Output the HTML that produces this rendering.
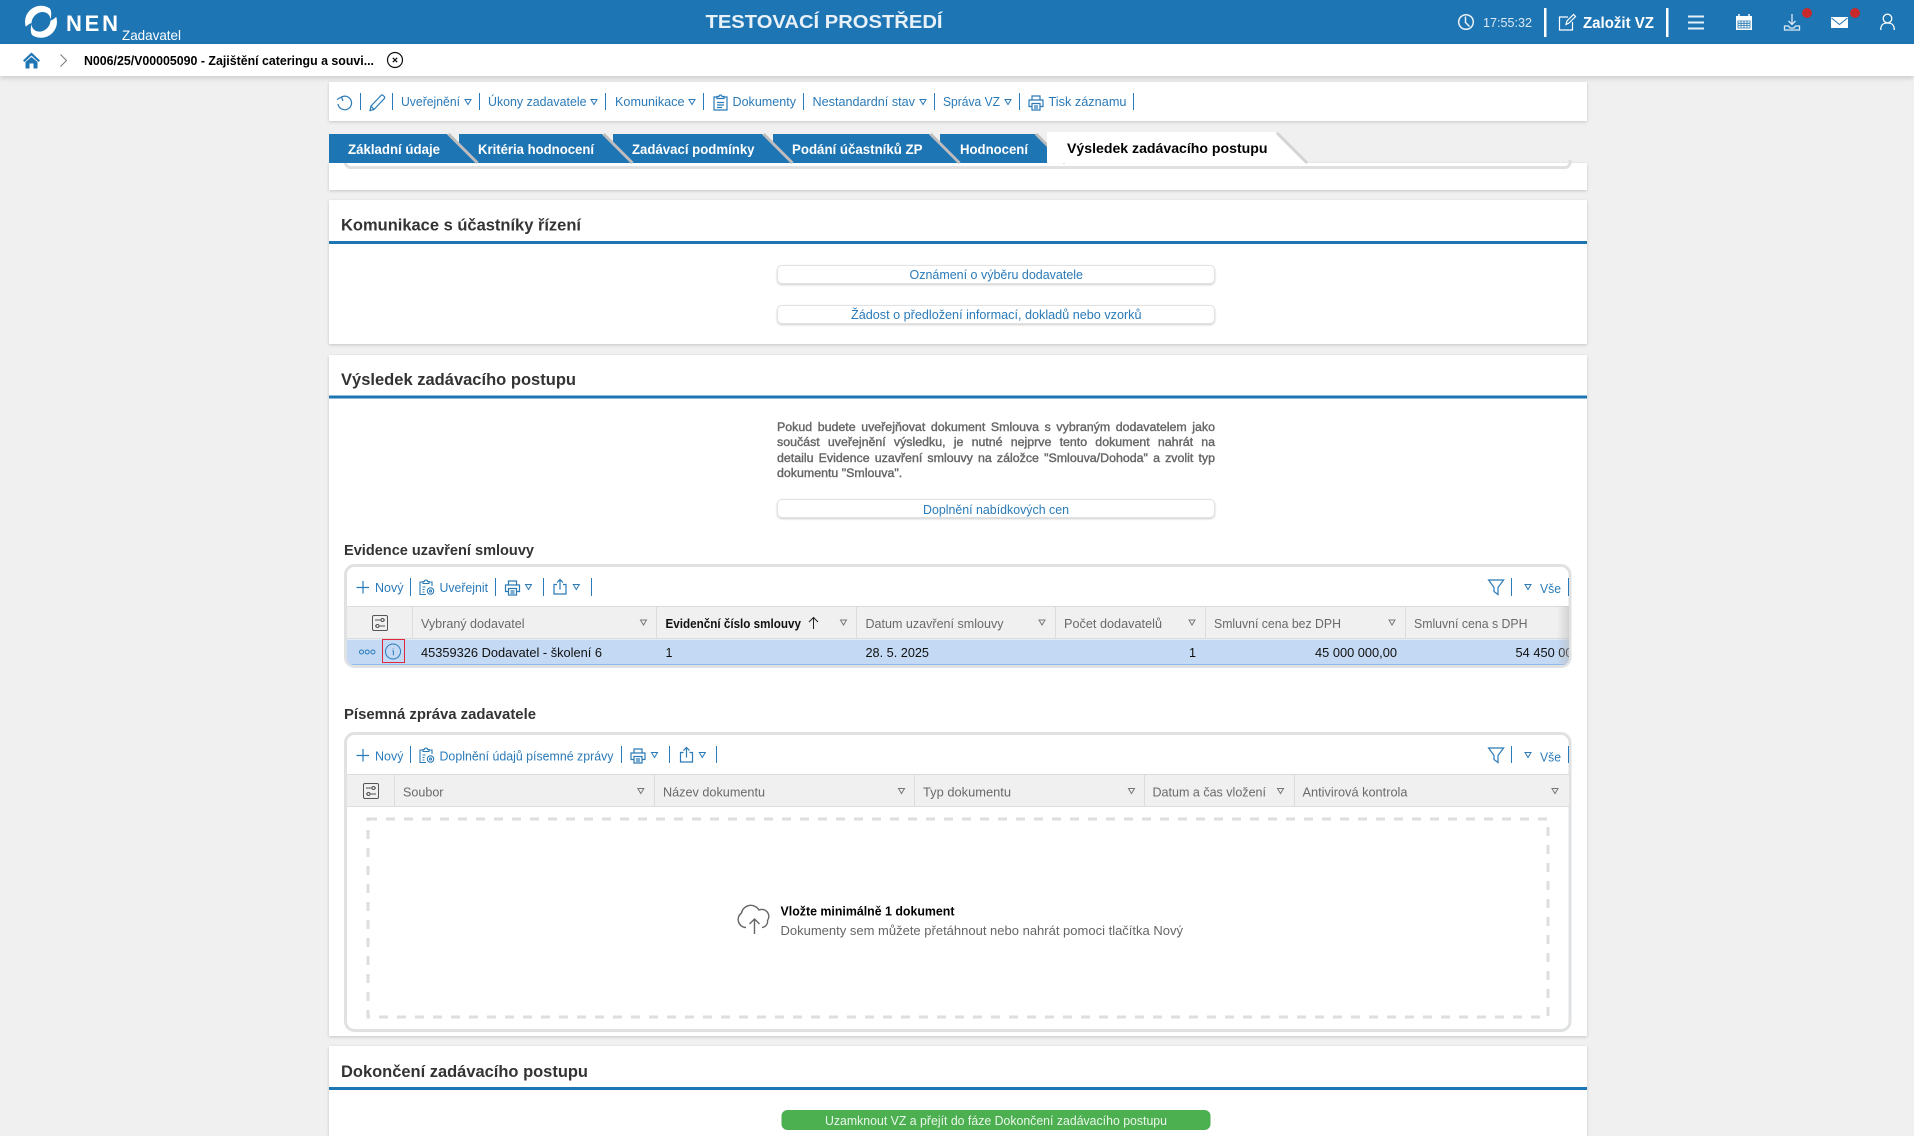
<!DOCTYPE html>
<html lang="cs"><head><meta charset="utf-8"><title>NEN</title>
<style>
html,body{margin:0;padding:0;width:1914px;height:1136px;overflow:hidden;background:#f0f0f0;font-family:"Liberation Sans",sans-serif}
.a{position:absolute}
.card{position:absolute;left:329px;width:1258px;background:#fff;box-shadow:0 1px 3px rgba(0,0,0,.18)}
.btn{position:absolute;left:777px;width:438px;height:19px;box-sizing:border-box;border:1px solid #e2e2e2;border-radius:5px;background:#fff;box-shadow:0 1px 2px rgba(0,0,0,.2)}
.j{position:absolute;left:777px;width:438px;font-size:12.4px;line-height:15px;color:#666;-webkit-text-stroke:.4px #666;white-space:nowrap;text-align:justify;text-align-last:justify}
svg{position:absolute;left:0;top:0}
text{font-family:"Liberation Sans",sans-serif;font-size:13px}
.l{fill:#2a7ab8}
.h{fill:#6a6a6a;font-size:12.6px}
.t{font-weight:bold;fill:#fff;font-size:13.5px}
.s{font-weight:bold;fill:#333;font-size:17px}
.u{font-weight:bold;fill:#333;font-size:14.5px}
.b{fill:#111;font-size:12.6px}
.ic{fill:none;stroke:#2a7ab8;stroke-width:1.2}
.wi{fill:none;stroke:#fff;stroke-width:1.5}
</style></head><body>
<div class="a" style="left:0;top:0;width:1914px;height:44px;background:#1e75b4"></div>
<div class="a" style="left:0;top:44px;width:1914px;height:32px;background:#fff;box-shadow:0 2px 5px rgba(0,0,0,.16)"></div>
<div class="card" style="top:82px;height:39px"></div>
<div class="card" style="top:163px;height:27px"></div>
<div class="card" style="top:200px;height:144px"></div>
<div class="card" style="top:355px;height:681px"></div>
<div class="card" style="top:1046px;height:90px"></div>
<div class="btn" style="top:264.5px"></div>
<div class="btn" style="top:304.5px"></div>
<div class="btn" style="top:499px"></div>
<div class="j" style="top:420px">Pokud budete uveřejňovat dokument Smlouva s vybraným dodavatelem jako</div>
<div class="j" style="top:435px">součást uveřejnění výsledku, je nutné nejprve tento dokument nahrát na</div>
<div class="j" style="top:451px">detailu Evidence uzavření smlouvy na záložce "Smlouva/Dohoda" a zvolit typ</div>
<div class="j" style="top:466px;text-align-last:left;width:auto">dokumentu "Smlouva".</div>

<svg width="1914" height="1136" viewBox="0 0 1914 1136" xmlns="http://www.w3.org/2000/svg">
<defs>
<path id="tri" d="M.5.5h6L3.5 5.5z" fill="none" stroke-width="1"/>
<g id="print" fill="none" stroke-width="1.2"><path d="M4 5V1h8v4M4 11.500H1V5h14v6.500h-3M4 8.500h8V15H4zM6 11h4M6 13h4"/></g>
<g id="share" fill="none" stroke-width="1.2"><path d="M4 6H1v9.500h12V6h-3M7 11V1M4 4l3-3 3 3"/></g>
<g id="clip" fill="none" stroke-width="1.1"><path d="M4 3H1v12.500h6M10 3h3v4M4 4.500V2.500h1.500a1.500 1.500 0 0 1 3 0H10v2zM3.500 8h3M3.500 10.500h2M3.500 13h2"/><circle cx="11.500" cy="12" r="3.200"/><circle cx="11.500" cy="12" r="1"/></g>
<g id="funnel" fill="none" stroke-width="1.200"><path d="M.6 1h15L10 8.500V15.500L6 12.500V8.500z"/></g>
<g id="set" fill="none" stroke="#555" stroke-width="1"><rect x=".5" y=".5" width="15" height="15" rx="1.500"/><path d="M3 5h6M12 5h1M3 11h1M7 11h6"/><circle cx="10.500" cy="5" r="1.500"/><circle cx="5.500" cy="11" r="1.500"/></g>
<linearGradient id="fade" x1="0" x2="1" y1="0" y2="0"><stop offset="0" stop-color="#bbb" stop-opacity="0"/><stop offset="1" stop-color="#bbb" stop-opacity=".55"/></linearGradient>
<clipPath id="box1"><rect x="347" y="567" width="1222" height="98" rx="7"/></clipPath>
</defs>

<!-- logo -->
<circle cx="41" cy="21.800" r="16" fill="#fff"/>
<ellipse cx="41" cy="21.800" rx="10.500" ry="8.800" transform="rotate(-50 41 21.800)" fill="#1e75b4"/>
<path d="M50 5.300L56 13.800Q53 18.300 50 19.300Q51 11.300 48 7.300zM32 38.300L26 29.800Q29 25.300 32 24.300Q31 32.300 34 36.300z" fill="#1e75b4" transform="rotate(8 41 21.800)"/>
<text x="66" y="31" textLength="52" lengthAdjust="spacing" style="font-size:22px;font-weight:bold;fill:#fff">NEN</text>
<text x="122" y="40" textLength="59" lengthAdjust="spacingAndGlyphs" style="font-size:14px;fill:#fff">Zadavatel</text>
<text x="705.500" y="28" textLength="237" lengthAdjust="spacingAndGlyphs" style="font-size:18px;font-weight:bold;fill:#e8f1f8">TESTOVACÍ PROSTŘEDÍ</text>

<!-- header right -->
<circle cx="1466" cy="22" r="7.300" class="wi" stroke-opacity=".9"/><path d="M1465.500 16.500V22.500L1469.500 26.500" class="wi" stroke-opacity=".9"/>
<text x="1483" y="27" textLength="49" lengthAdjust="spacingAndGlyphs" style="font-size:13px;fill:#dbe9f4">17:55:32</text>
<rect x="1544" y="8" width="2.500" height="29" fill="#fff"/>
<path d="M1568 17H1559.500V30H1572.500V22M1566 24.500L1567 21L1573.500 14.500L1575.500 16.500L1569 23z" class="wi" style="stroke-width:1.200"/>
<text x="1583" y="28" textLength="71" lengthAdjust="spacingAndGlyphs" style="font-size:15.500px;font-weight:bold;fill:#fff">Založit VZ</text>
<rect x="1666" y="8" width="2.500" height="29" fill="#fff"/>
<path d="M1688 16.500h16M1688 22.500h16M1688 28.500h16" stroke="#e6f0f7" stroke-width="2" fill="none"/>
<path d="M1736 16h16v14h-16z" fill="#fff"/><path d="M1739 14v3.500M1749 14v3.500" stroke="#fff" stroke-width="1.500"/>
<path d="M1738 21h12v7h-12zM1738 23.300h12M1738 25.600h12M1741 21v7M1744 21v7M1747 21v7" fill="none" stroke="#1e75b4" stroke-width=".8"/>
<path d="M1792 14v10M1788.500 21l3.500 3.500 3.500-3.500M1784.500 26h4l1.500 2h4l1.500-2h4v4h-15z" fill="none" stroke="#dbe9f4" stroke-width="1.300"/>
<circle cx="1807" cy="13" r="5" fill="#c62a2a"/>
<path d="M1831 17h17v11h-17z" fill="#fff"/><path d="M1831.500 18l8 6.500 8-6.500" fill="none" stroke="#1e75b4" stroke-width="1"/>
<circle cx="1855" cy="13" r="5" fill="#c62a2a"/>
<circle cx="1887.500" cy="18.500" r="4.300" class="wi" style="stroke-width:1.300"/><path d="M1880.700 30c0-5 2-7 6.800-7s6.800 2 6.800 7" class="wi" style="stroke-width:1.300"/>

<!-- breadcrumb -->
<path d="M23 60.500L31.500 52.500 40 60.500 38.500 62 31.500 55.500 24.500 62z" fill="#1e75b4"/>
<path d="M25.500 62L31.500 57 37.500 62V68.500H33.500V63.500H29.500V68.500H25.500z" fill="#1e75b4"/>
<path d="M60.500 54.500L66.500 60.500 60.500 66.500" fill="none" stroke="#777" stroke-width="1"/>
<text x="84" y="65" textLength="290" lengthAdjust="spacingAndGlyphs" style="font-size:12.800px;font-weight:bold;fill:#000">N006/25/V00005090 - Zajištění cateringu a souvi...</text>
<circle cx="395" cy="60" r="7.500" fill="none" stroke="#111" stroke-width="1.200"/><path d="M392.800 57.800l4.400 4.400M397.200 57.800l-4.400 4.400" stroke="#111" stroke-width="1.300"/>

<!-- toolbar -->
<g stroke="#2a7ab8" stroke-width="1" fill="none">
<path d="M360.500 93v17M392.500 93v17M479.500 93v17M605.500 93v17M703.500 93v17M803.500 93v17M934.500 93v17M1019.500 93v17M1133.500 93v17"/>
</g>
<g class="ic">
<path d="M341.500 97A6.800 6.800 0 1 1 338 104"/><path d="M337 99.500L341.500 97 343 101"/>
<path d="M370 110.500l1-4.500L381 95.500a1.500 1.500 0 0 1 2.200 0l1 1a1.500 1.500 0 0 1 0 2.200L374 109.500zM371 106l3 3.500"/>
<path d="M717 97h-3v13h13V97h-3M717 98.500V96.500h2a1.500 1.500 0 0 1 3 0h2v2zM717 102.500h7M717 105h7M717 107.500h5"/>
</g>
<use href="#print" x="1028" y="95" stroke="#2a7ab8"/>
<text class="l" x="401" y="106" textLength="59" lengthAdjust="spacingAndGlyphs">Uveřejnění</text>
<text class="l" x="488" y="106" textLength="98.500" lengthAdjust="spacingAndGlyphs">Úkony zadavatele</text>
<text class="l" x="615" y="106" textLength="69.500" lengthAdjust="spacingAndGlyphs">Komunikace</text>
<text class="l" x="732.500" y="106" textLength="63.500" lengthAdjust="spacingAndGlyphs">Dokumenty</text>
<text class="l" x="812.500" y="106" textLength="102.500" lengthAdjust="spacingAndGlyphs">Nestandardní stav</text>
<text class="l" x="943" y="106" textLength="57" lengthAdjust="spacingAndGlyphs">Správa VZ</text>
<text class="l" x="1048.500" y="106" textLength="78" lengthAdjust="spacingAndGlyphs">Tisk záznamu</text>
<g stroke="#2a7ab8"><use href="#tri" x="464.500" y="99"/><use href="#tri" x="590.500" y="99"/><use href="#tri" x="688.500" y="99"/><use href="#tri" x="919.500" y="99"/><use href="#tri" x="1004.500" y="99"/></g>

<!-- inner box bottom under tabs -->
<path d="M345.500 160V162a5 5 0 0 0 5 5.500H1565a5 5 0 0 0 5-5.500V160" fill="none" stroke="#e0e0e0" stroke-width="3"/>

<!-- tabs -->
<path d="M940 134H1035L1064 163H940z" fill="#1e75b4"/><path d="M1036 134L1065 163" stroke="#bdbdbd" stroke-width="3"/>
<path d="M1047 132H1275L1306 163H1047z" fill="#fff"/><path d="M1277 133L1307 163" stroke="#d4d4d4" stroke-width="3"/>
<path d="M773 134H929L958 163H773z" fill="#1e75b4"/><path d="M930.500 134L959.500 163" stroke="#bdbdbd" stroke-width="3"/>
<path d="M613 134H762L791 163H613z" fill="#1e75b4"/><path d="M763.500 134L792.500 163" stroke="#bdbdbd" stroke-width="3"/>
<path d="M459 134H602L631 163H459z" fill="#1e75b4"/><path d="M603.500 134L632.500 163" stroke="#bdbdbd" stroke-width="3"/>
<path d="M329 134H447L476 163H329z" fill="#1e75b4"/><path d="M448.500 134L477.500 163" stroke="#bdbdbd" stroke-width="3"/>
<text class="t" x="348" y="154" textLength="92" lengthAdjust="spacingAndGlyphs">Základní údaje</text>
<text class="t" x="478" y="154" textLength="116" lengthAdjust="spacingAndGlyphs">Kritéria hodnocení</text>
<text class="t" x="632" y="154" textLength="122.500" lengthAdjust="spacingAndGlyphs">Zadávací podmínky</text>
<text class="t" x="792" y="154" textLength="130.500" lengthAdjust="spacingAndGlyphs">Podání účastníků ZP</text>
<text class="t" x="960" y="154" textLength="68" lengthAdjust="spacingAndGlyphs">Hodnocení</text>
<text class="t" x="1067" y="153" textLength="200.500" lengthAdjust="spacingAndGlyphs" style="fill:#000;font-size:14px">Výsledek zadávacího postupu</text>

<!-- section: komunikace -->
<text class="s" x="341" y="230.500" textLength="240" lengthAdjust="spacingAndGlyphs">Komunikace s účastníky řízení</text>
<rect x="329" y="241" width="1258" height="3" fill="#1e75b4"/>
<text class="l" x="909.500" y="279" textLength="173.500" lengthAdjust="spacingAndGlyphs">Oznámení o výběru dodavatele</text>
<text class="l" x="851" y="319" textLength="290.500" lengthAdjust="spacingAndGlyphs">Žádost o předložení informací, dokladů nebo vzorků</text>

<!-- section: vysledek -->
<text class="s" x="341" y="385" textLength="235" lengthAdjust="spacingAndGlyphs">Výsledek zadávacího postupu</text>
<rect x="329" y="395.500" width="1258" height="3" fill="#1e75b4"/>
<text class="l" x="923" y="514" textLength="146" lengthAdjust="spacingAndGlyphs">Doplnění nabídkových cen</text>

<text class="u" x="344" y="555" textLength="190" lengthAdjust="spacingAndGlyphs">Evidence uzavření smlouvy</text>
<rect x="345.500" y="565.500" width="1224.500" height="101" rx="9" fill="#fff" stroke="#dfe1e3" stroke-width="3"/>
<g clip-path="url(#box1)">
<rect x="347" y="606" width="1222" height="33" fill="#f0f0f0"/>
<path d="M347 606.500H1569M347 638.500H1569" stroke="#dcdcdc" stroke-width="1"/>
<path d="M412.500 606v33M656.500 606v33M856.500 606v33M1055.500 606v33M1205.500 606v33M1405.500 606v33" stroke="#dcdcdc" stroke-width="1"/>
<rect x="347" y="639.500" width="1222" height="25.500" fill="#c3d9f4"/>
<rect x="347" y="664" width="1222" height="1" fill="#8dbbee"/>
<text class="h" x="421" y="628" textLength="103.500" lengthAdjust="spacingAndGlyphs">Vybraný dodavatel</text>
<text x="665.500" y="628" textLength="135.500" lengthAdjust="spacingAndGlyphs" style="font-weight:bold;fill:#111;font-size:12.600px">Evidenční číslo smlouvy</text>
<path d="M813.500 629V617.500M809 622L813.500 617.500 818 622" fill="none" stroke="#222" stroke-width="1"/>
<text class="h" x="865.500" y="628" textLength="138" lengthAdjust="spacingAndGlyphs">Datum uzavření smlouvy</text>
<text class="h" x="1064" y="628" textLength="98" lengthAdjust="spacingAndGlyphs">Počet dodavatelů</text>
<text class="h" x="1214" y="628" textLength="127" lengthAdjust="spacingAndGlyphs">Smluvní cena bez DPH</text>
<text class="h" x="1414" y="628" textLength="113.500" lengthAdjust="spacingAndGlyphs">Smluvní cena s DPH</text>
<g stroke="#777"><use href="#tri" x="640" y="619.500"/><use href="#tri" x="840" y="619.500"/><use href="#tri" x="1038.500" y="619.500"/><use href="#tri" x="1188.500" y="619.500"/><use href="#tri" x="1388.500" y="619.500"/></g>
<text class="b" x="421" y="657" textLength="181" lengthAdjust="spacingAndGlyphs">45359326 Dodavatel - školení 6</text>
<text class="b" x="665.500" y="657">1</text>
<text class="b" x="865.500" y="657" textLength="63.500" lengthAdjust="spacingAndGlyphs">28. 5. 2025</text>
<text class="b" x="1189" y="657">1</text>
<text class="b" x="1315" y="657" textLength="82" lengthAdjust="spacingAndGlyphs">45 000 000,00</text>
<text class="b" x="1515.500" y="657" textLength="82" lengthAdjust="spacingAndGlyphs">54 450 000,00</text>
<rect x="1557" y="606" width="12" height="60" fill="url(#fade)"/>
</g>
<use href="#set" x="372" y="615"/>
<g fill="none" stroke="#2a7ab8" stroke-width="1"><circle cx="361.500" cy="652" r="2"/><circle cx="367.200" cy="652" r="2"/><circle cx="372.900" cy="652" r="2"/></g>
<rect x="382.500" y="639.500" width="22" height="23" fill="none" stroke="#e0283c" stroke-width="1"/>
<circle cx="393" cy="651.500" r="7.500" fill="none" stroke="#2a7ab8" stroke-width="1"/><path d="M393 648.500v.8M392.400 651h1v4.200" fill="none" stroke="#2a7ab8" stroke-width="1"/>

<!-- toolbar 1 -->
<path d="M410.500 578v18M495.500 578v18M543.500 578v18M591.500 578v18M1511.500 578v18M1568.500 578v18" stroke="#2a7ab8" stroke-width="1"/>
<path d="M363 581v12.500M356.500 587.500H369" stroke="#2a7ab8" stroke-width="1.200"/>
<text class="l" x="375" y="592" textLength="28.500" lengthAdjust="spacingAndGlyphs">Nový</text>
<use href="#clip" x="419" y="579" stroke="#2a7ab8"/>
<text class="l" x="439.500" y="592" textLength="48.500" lengthAdjust="spacingAndGlyphs">Uveřejnit</text>
<use href="#print" x="504.500" y="580" stroke="#2a7ab8"/>
<use href="#share" x="553" y="578.500" stroke="#2a7ab8"/>
<use href="#funnel" x="1488" y="579" stroke="#2a7ab8"/>
<text class="l" x="1540" y="593" textLength="21" lengthAdjust="spacingAndGlyphs">Vše</text>
<g stroke="#2a7ab8"><use href="#tri" x="525" y="584"/><use href="#tri" x="572.800" y="584"/><use href="#tri" x="1524.500" y="584"/></g>

<!-- pisemna zprava -->
<text class="u" x="344" y="719" textLength="192" lengthAdjust="spacingAndGlyphs">Písemná zpráva zadavatele</text>
<rect x="345.500" y="733.500" width="1224.500" height="297" rx="9" fill="#fff" stroke="#dfe1e3" stroke-width="3"/>
<rect x="347" y="774" width="1222" height="33" fill="#f0f0f0"/>
<path d="M347 774.500H1569M347 806.500H1569" stroke="#dcdcdc" stroke-width="1"/>
<path d="M394.500 774v33M654.500 774v33M914.500 774v33M1144.500 774v33M1294.500 774v33" stroke="#dcdcdc" stroke-width="1"/>
<use href="#set" x="363" y="783"/>
<text class="h" x="403" y="796.700" textLength="40.500" lengthAdjust="spacingAndGlyphs">Soubor</text>
<text class="h" x="663" y="796.700" textLength="102" lengthAdjust="spacingAndGlyphs">Název dokumentu</text>
<text class="h" x="923" y="796.700" textLength="88" lengthAdjust="spacingAndGlyphs">Typ dokumentu</text>
<text class="h" x="1152.500" y="796.700" textLength="113.500" lengthAdjust="spacingAndGlyphs">Datum a čas vložení</text>
<text class="h" x="1302.500" y="796.700" textLength="105" lengthAdjust="spacingAndGlyphs">Antivirová kontrola</text>
<g stroke="#777"><use href="#tri" x="637.300" y="788"/><use href="#tri" x="898" y="788"/><use href="#tri" x="1128" y="788"/><use href="#tri" x="1277" y="788"/><use href="#tri" x="1551.500" y="788"/></g>
<path d="M410.500 746v17M621.500 746v17M669.500 746v17M716.500 746v17M1511.500 746v17M1568.500 746v17" stroke="#2a7ab8" stroke-width="1"/>
<path d="M363 749v12.500M356.500 755.500H369" stroke="#2a7ab8" stroke-width="1.200"/>
<text class="l" x="375" y="760.700" textLength="28.500" lengthAdjust="spacingAndGlyphs">Nový</text>
<use href="#clip" x="419" y="747" stroke="#2a7ab8"/>
<text class="l" x="439.500" y="760.700" textLength="174" lengthAdjust="spacingAndGlyphs">Doplnění údajů písemné zprávy</text>
<use href="#print" x="630" y="748" stroke="#2a7ab8"/>
<use href="#share" x="679.500" y="746.500" stroke="#2a7ab8"/>
<use href="#funnel" x="1488" y="747" stroke="#2a7ab8"/>
<text class="l" x="1540" y="761.500" textLength="21" lengthAdjust="spacingAndGlyphs">Vše</text>
<g stroke="#2a7ab8"><use href="#tri" x="651" y="752"/><use href="#tri" x="698.800" y="752"/><use href="#tri" x="1524.500" y="752"/></g>
<rect x="368" y="819" width="1180" height="198" fill="none" stroke="#dedede" stroke-width="3" stroke-dasharray="9 9"/>
<g transform="translate(738,903)" fill="none" stroke="#666" stroke-width="1.400">
<path d="M8 24.500A8 8 0 0 1 3.500 10A9.500 9.500 0 0 1 21 7A7 7 0 0 1 29.500 17.500A6 6 0 0 1 24 24.500"/>
<path d="M16.500 31V16M11.500 21l5-5 5 5"/></g>
<text x="780.500" y="915.700" textLength="174" lengthAdjust="spacingAndGlyphs" style="font-weight:bold;fill:#000;font-size:12.800px">Vložte minimálně 1 dokument</text>
<text x="780.500" y="935" textLength="402.500" lengthAdjust="spacingAndGlyphs" style="fill:#666;font-size:12.800px">Dokumenty sem můžete přetáhnout nebo nahrát pomoci tlačítka Nový</text>

<!-- dokonceni -->
<text class="s" x="341" y="1077" textLength="247" lengthAdjust="spacingAndGlyphs">Dokončení zadávacího postupu</text>
<rect x="329" y="1087" width="1258" height="3" fill="#1e75b4"/>
<rect x="781.500" y="1110" width="429" height="20" rx="6" fill="#4caf50"/>
<text x="825" y="1125" textLength="342" lengthAdjust="spacingAndGlyphs" style="fill:#eaf6ea;font-size:12.800px">Uzamknout VZ a přejít do fáze Dokončení zadávacího postupu</text>
</svg>
</body></html>
